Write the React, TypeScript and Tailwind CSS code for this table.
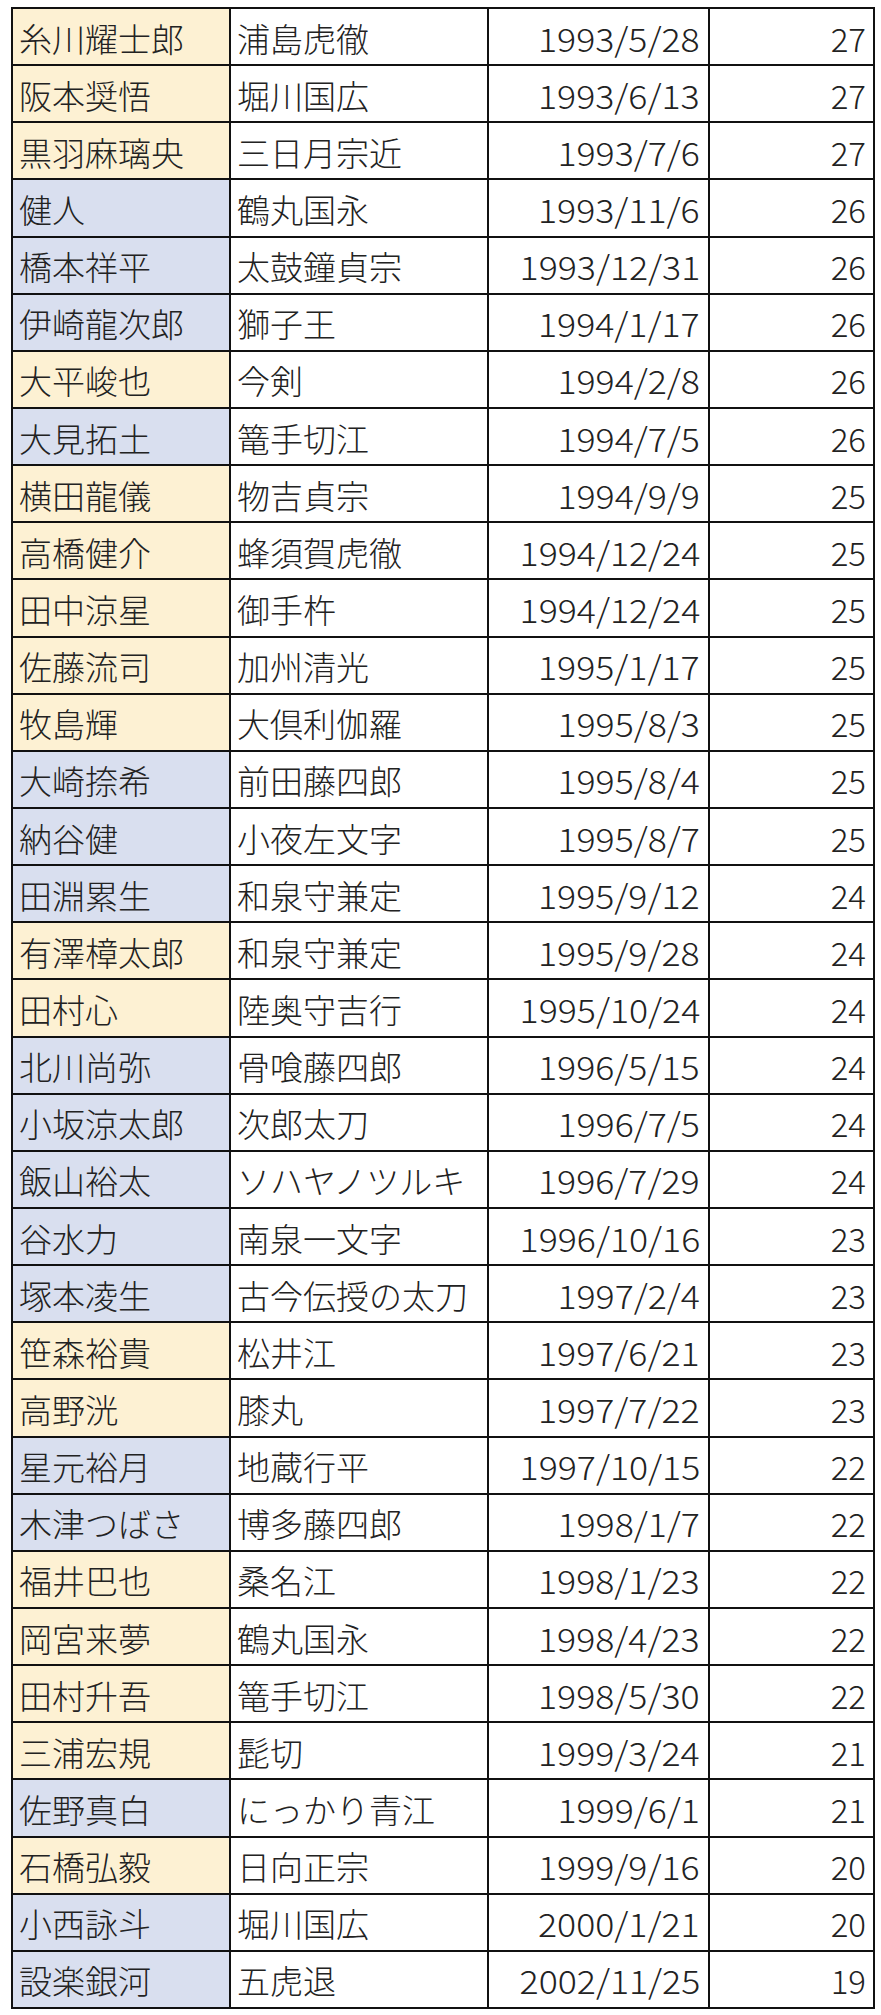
import React from "react";

type Row = [string, string, string, string, "Y" | "B"];

const rows: Row[] = [
  ["糸川耀士郎", "浦島虎徹", "1993/5/28", "27", "Y"],
  ["阪本奨悟", "堀川国広", "1993/6/13", "27", "Y"],
  ["黒羽麻璃央", "三日月宗近", "1993/7/6", "27", "Y"],
  ["健人", "鶴丸国永", "1993/11/6", "26", "B"],
  ["橋本祥平", "太鼓鐘貞宗", "1993/12/31", "26", "B"],
  ["伊崎龍次郎", "獅子王", "1994/1/17", "26", "B"],
  ["大平峻也", "今剣", "1994/2/8", "26", "Y"],
  ["大見拓土", "篭手切江", "1994/7/5", "26", "B"],
  ["横田龍儀", "物吉貞宗", "1994/9/9", "25", "Y"],
  ["高橋健介", "蜂須賀虎徹", "1994/12/24", "25", "Y"],
  ["田中涼星", "御手杵", "1994/12/24", "25", "Y"],
  ["佐藤流司", "加州清光", "1995/1/17", "25", "Y"],
  ["牧島輝", "大倶利伽羅", "1995/8/3", "25", "Y"],
  ["大崎捺希", "前田藤四郎", "1995/8/4", "25", "B"],
  ["納谷健", "小夜左文字", "1995/8/7", "25", "B"],
  ["田淵累生", "和泉守兼定", "1995/9/12", "24", "B"],
  ["有澤樟太郎", "和泉守兼定", "1995/9/28", "24", "Y"],
  ["田村心", "陸奥守吉行", "1995/10/24", "24", "Y"],
  ["北川尚弥", "骨喰藤四郎", "1996/5/15", "24", "B"],
  ["小坂涼太郎", "次郎太刀", "1996/7/5", "24", "B"],
  ["飯山裕太", "ソハヤノツルキ", "1996/7/29", "24", "B"],
  ["谷水力", "南泉一文字", "1996/10/16", "23", "B"],
  ["塚本凌生", "古今伝授の太刀", "1997/2/4", "23", "B"],
  ["笹森裕貴", "松井江", "1997/6/21", "23", "Y"],
  ["高野洸", "膝丸", "1997/7/22", "23", "Y"],
  ["星元裕月", "地蔵行平", "1997/10/15", "22", "B"],
  ["木津つばさ", "博多藤四郎", "1998/1/7", "22", "B"],
  ["福井巴也", "桑名江", "1998/1/23", "22", "Y"],
  ["岡宮来夢", "鶴丸国永", "1998/4/23", "22", "Y"],
  ["田村升吾", "篭手切江", "1998/5/30", "22", "Y"],
  ["三浦宏規", "髭切", "1999/3/24", "21", "Y"],
  ["佐野真白", "にっかり青江", "1999/6/1", "21", "B"],
  ["石橋弘毅", "日向正宗", "1999/9/16", "20", "Y"],
  ["小西詠斗", "堀川国広", "2000/1/21", "20", "B"],
  ["設楽銀河", "五虎退", "2002/11/25", "19", "B"],
];

export default function App() {
  return (
    <div className="w-[881px] h-[2015px] bg-white pt-[7px] pl-[11px]">
      <div
        className="grid w-[864px] h-[2002px] gap-[2px] p-[2px] bg-[#111] grid-cols-[216px_256px_219px_163px] grid-rows-[repeat(35,minmax(0,1fr))] text-[33px] font-light leading-none text-[#222]"
        style={{ fontFamily: '"Noto Sans CJK JP", "Noto Sans", sans-serif' }}
      >
        {rows.map(([name, role, date, age, c], i) => (
          <React.Fragment key={i}>
            <div
              className={`flex items-center pl-[6px] pt-[3px] whitespace-nowrap overflow-hidden ${
                c === "Y" ? "bg-[#fdf1d3]" : "bg-[#d9dfef]"
              }`}
            >
              {name}
            </div>
            <div className="flex items-center pl-[6px] pt-[3px] bg-white whitespace-nowrap overflow-hidden">
              {role}
            </div>
            <div className="flex items-center justify-end pr-[8px] pt-[3px] bg-white whitespace-nowrap">
              <span className="scale-x-[1.08] origin-right inline-block">{date}</span>
            </div>
            <div className="flex items-center justify-end pr-[7px] pt-[3px] bg-white whitespace-nowrap">
              {age}
            </div>
          </React.Fragment>
        ))}
      </div>
    </div>
  );
}
